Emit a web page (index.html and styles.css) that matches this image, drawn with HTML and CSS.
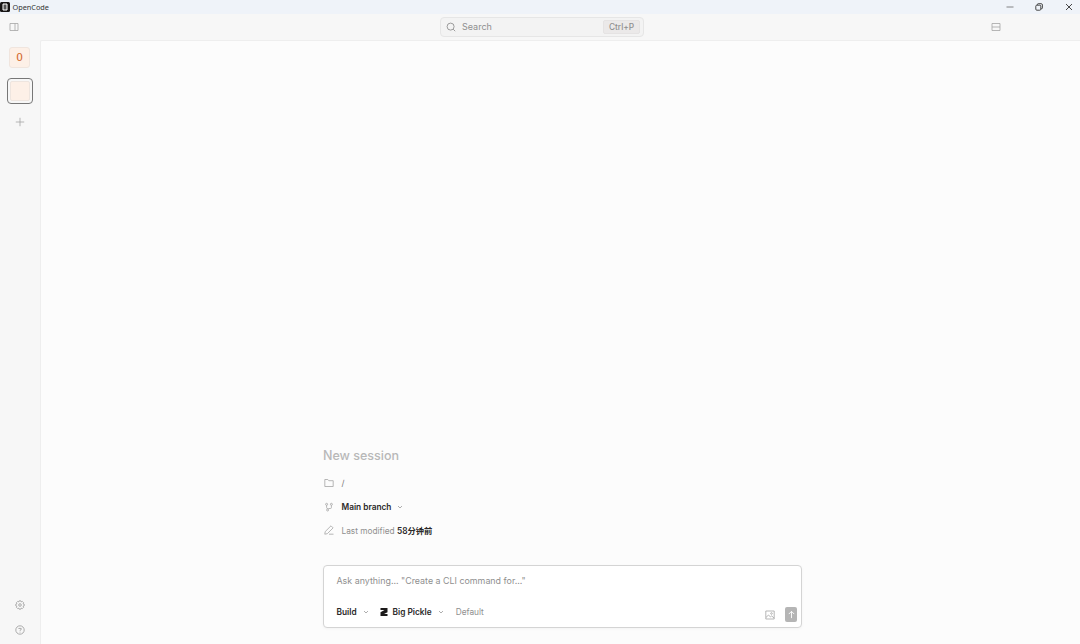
FILE: index.html
```html
<!doctype html>
<html lang="en">
<head>
    <meta charset="UTF-8">
    <meta name="viewport" content="width=device-width, initial-scale=1.0">
    <title>OpenCode</title>
    <link rel="stylesheet" href="styles.css">
</head>
<body>
    <!-- Window title bar -->
    <header class="titlebar">
        <svg class="logo" viewBox="0 0 10 10"><rect width="10" height="10" rx="1.5" fill="#171515"/><path d="M3 2h4v6H3z" fill="#555" stroke="#fff" stroke-width="1"/></svg>
        <span class="app-name">OpenCode</span>
        <div class="window-buttons">
            <svg viewBox="0 0 10 10"><path d="M1.5 5h7" stroke="#777"/></svg>
            <svg viewBox="0 0 10 10"><rect x="1.8" y="3.2" width="5" height="5" rx="1"/><path d="M3.4 3V2.5q0-.8.8-.8h3q1.2 0 1.2 1.2v3q0 .8-.8.8h-.5"/></svg>
            <svg viewBox="0 0 10 10"><path d="M2 2l6 6M8 2L2 8"/></svg>
        </div>
    </header>

    <!-- Toolbar -->
    <div class="toolbar">
        <svg class="icon toggle-sidebar" viewBox="0 0 10 10"><path d="M1 1.5h8v7H1zM6 1.5v7"/></svg>
        <div class="search">
            <svg class="icon search-icon" viewBox="0 0 10 10"><circle cx="4.6" cy="4.6" r="3.5"/><path d="M7.2 7.2l2 2"/></svg>
            <span>Search</span>
            <kbd>Ctrl+P</kbd>
        </div>
        <svg class="icon toggle-panel" viewBox="0 0 10 10"><path d="M1 1.5h8v7H1zM1 5h8"/></svg>
    </div>

    <div class="workspace">
        <!-- Projects -->
        <nav class="sidebar">
            <div class="project">O</div>
            <div class="project-active"><div class="project-tile"></div></div>
            <svg class="icon add" viewBox="0 0 10 10"><path d="M5 .8v8.4M.8 5h8.4"/></svg>
            <svg class="icon settings" viewBox="0 0 10 10"><path d="M4.2.8h1.6l.4 1.1 1.1-.5 1.3 1.3-.5 1.1 1.1.4v1.6l-1.1.4.5 1.1-1.3 1.3-1.1-.5-.4 1.1H4.2l-.4-1.1-1.1.5-1.3-1.3.5-1.1-1.1-.4V4.2l1.1-.4-.5-1.1 1.3-1.3 1.1.5z"/><circle cx="5" cy="5" r="1.3"/></svg>
            <svg class="icon help" viewBox="0 0 10 10"><circle cx="5" cy="5" r="4.2"/><path d="M3.8 4V3.4h2.4v1.2L5 5.3v.5M5 6.7v.8"/></svg>
        </nav>

        <main class="main">
            <section class="session">
                <h1>New session</h1>
                <div class="info">
                    <svg class="icon" viewBox="0 0 10 10"><path d="M.8 1.5h3l1 1.2h4.4v5.8H.8z"/></svg>
                    <span class="path">/</span>
                </div>
                <div class="info">
                    <svg class="icon" viewBox="0 0 10 10"><circle cx="2.6" cy="2.3" r="1"/><circle cx="7.4" cy="2.3" r="1"/><circle cx="3.6" cy="8" r="1"/><path d="M2.6 3.3v2.2l1 1.5M7.4 3.3v2.2q0 1-1 1H4.3"/></svg>
                    <strong>Main branch</strong>
                    <svg class="chevron" viewBox="0 0 6 6"><path d="M1 2l2 2 2-2"/></svg>
                </div>
                <div class="info modified">
                    <svg class="icon" viewBox="0 0 10 10"><path d="M.8 9.2l.4-2.6L7 .8l2.1 2.1-5.8 5.8zM5 9.2h4.5"/></svg>
                    <span>Last modified <strong>58分钟前</strong></span>
                </div>
            </section>

            <!-- Prompt box -->
            <section class="prompt">
                <div class="placeholder">Ask anything... "Create a CLI command for..."</div>
                <div class="actions">
                    <strong class="agent">Build</strong>
                    <svg class="chevron" viewBox="0 0 6 6"><path d="M1 2l2 2 2-2"/></svg>
                    <svg class="model-icon" viewBox="0 0 8 8"><path d="M.5 0h7v4.3L4 6h3.5v2h-7V4.2L4.5 2h-4z"/></svg>
                    <strong class="model">Big Pickle</strong>
                    <svg class="chevron" viewBox="0 0 6 6"><path d="M1 2l2 2 2-2"/></svg>
                    <span class="variant">Default</span>
                    <svg class="icon attach" viewBox="0 0 10 10"><path d="M.8 1h8.4v8H.8zM1 7.4L3.5 5l2 2 1.2-1.1L9 8"/><circle cx="6.5" cy="3.5" r=".8"/></svg>
                    <div class="send"><svg viewBox="0 0 10 10"><path d="M5 9V1.5M2 4.5l3-3 3 3"/></svg></div>
                </div>
            </section>
        </main>
    </div>
</body>
</html>
```
FILE: styles.css
```css
* {
    box-sizing: border-box;
}

body {
    margin: 0;
    height: 100vh;
    display: flex;
    flex-direction: column;
    overflow: hidden;
    background-color: #f7f7f7;
    color: #8f8f8f;
    font-family: Inter, "Noto Sans CJK SC", sans-serif;
    font-size: 8.3px;
}

svg {
    display: block;
    flex: none;
    fill: none;
}

strong {
    color: #2b2929;
    font-weight: 600;
}

.icon {
    width: 10px;
    height: 10px;
    stroke: #a5a5a5;
    stroke-width: 0.8;
}

/* Title bar */
.titlebar {
    display: flex;
    align-items: center;
    height: 14px;
    background-color: #eff3f9;
}

.logo {
    width: 10px;
    height: 10px;
}

.app-name {
    margin-left: 2.5px;
    color: #333;
    font-family: "Noto Sans", sans-serif;
    font-size: 7.3px;
}

.window-buttons {
    display: flex;
    gap: 19.5px;
    margin-left: auto;
    padding-right: 6.5px;
}

.window-buttons svg {
    width: 10px;
    height: 10px;
    stroke: #333;
    stroke-width: 0.9;
}

/* Toolbar */
.toolbar {
    display: grid;
    grid-template-columns: 1fr 204px 1fr;
    align-items: center;
    height: 26px;
    padding: 0 5px 0 9px;
}

.search {
    display: flex;
    align-items: center;
    height: 20px;
    padding: 0 3px 0 5px;
    border: 1px solid #e6e6e6;
    border-radius: 4px;
    background-color: #f3f3f3;
    font-size: 9px;
}

.search span {
    margin-top: -1px;
}

.search-icon {
    margin-right: 6px;
    stroke: #858585;
}

kbd {
    width: 37px;
    height: 14px;
    margin-left: auto;
    border: 1px solid #e5e3e3;
    border-radius: 2px;
    background-color: #ebe9e9;
    font-family: inherit;
    font-size: 8.3px;
    font-weight: 500;
    line-height: 12px;
    text-align: center;
}

.toggle-panel {
    justify-self: end;
    margin-right: 74.5px;
}

/* Sidebar */
.workspace {
    display: flex;
    flex: 1;
}

.sidebar {
    display: flex;
    flex-direction: column;
    align-items: center;
    width: 40px;
    padding: 7px 1px 9px 0;
}

.project {
    width: 21px;
    height: 21px;
    border: 1px solid #f0e5de;
    border-radius: 3px;
    background-color: #fdf0e7;
    color: #d3692d;
    font-family: "DejaVu Sans Mono", monospace;
    font-size: 11px;
    line-height: 20px;
    text-align: center;
}

.project-active {
    width: 26px;
    height: 26px;
    margin: 10px 0 13px;
    padding: 2px;
    border: 1px solid #777;
    border-radius: 4px;
}

.project-tile {
    height: 20px;
    border: 1px solid #eee5df;
    border-radius: 2px;
    background-color: #fdf0e7;
}

.settings {
    margin-top: auto;
    margin-bottom: 15.5px;
}

.help,
.settings {
    stroke: #999;
}

/* Main area */
.main {
    flex: 1;
    display: flex;
    flex-direction: column;
    justify-content: flex-end;
    padding: 0 278px 16px 282px;
    border-top: 1px solid #eee;
    border-left: 1px solid #eee;
    border-top-left-radius: 2px;
    background-color: #fcfcfc;
}

.session {
    margin-bottom: 24px;
}

h1 {
    margin: 0 0 6px;
    color: #b8b8b8;
    font-size: 12.5px;
    font-weight: 500;
    line-height: 19px;
}

.info {
    display: flex;
    align-items: center;
    height: 24px;
    padding-left: 0.5px;
}

.info .icon {
    margin-right: 8px;
}

.modified {
    height: 22px;
}

.path {
    color: #777;
}

.chevron {
    width: 6px;
    height: 6px;
    margin-left: 6px;
    stroke: #999;
    stroke-width: 0.8;
}

/* Prompt */
.prompt {
    display: flex;
    flex-direction: column;
    justify-content: space-between;
    height: 63px;
    padding: 9px 4px 4px 12.5px;
    border: 1px solid #d4d4d4;
    border-radius: 4px;
    background-color: #fff;
    box-shadow: 0 1px 3px rgba(0, 0, 0, 0.04);
}

.placeholder {
    font-size: 8.9px;
    line-height: 11px;
}

.actions {
    display: flex;
    align-items: center;
    height: 17px;
}

.agent,
.model,
.variant,
.actions .chevron {
    position: relative;
    top: -3px;
}

.model-icon {
    width: 8px;
    height: 8px;
    margin: -5px 5px 0 11px;
    fill: #1c1a1a;
}

.variant {
    margin-left: 12px;
}

.attach {
    margin-left: auto;
    margin-right: 10px;
}

.send {
    display: flex;
    align-items: center;
    justify-content: center;
    width: 12px;
    height: 15px;
    border-radius: 2px;
    background-color: #b5b5b5;
}

.send svg {
    width: 9px;
    height: 9px;
    stroke: #fff;
    stroke-width: 1;
}
```
